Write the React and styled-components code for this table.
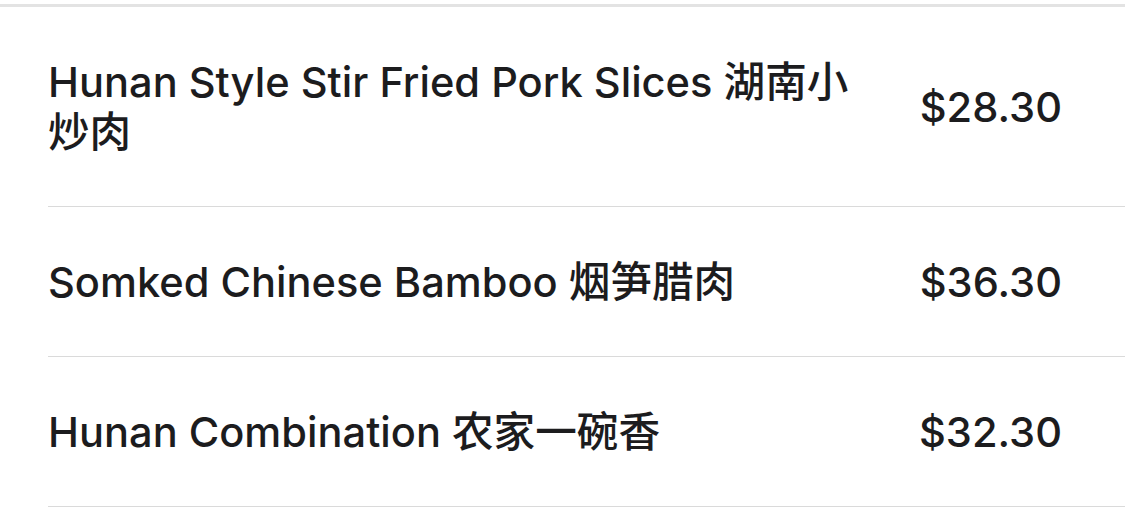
import styled, { createGlobalStyle } from "styled-components";

const GlobalStyle = createGlobalStyle`
	html, body {
		margin: 0;
		padding: 0;
		background: #ffffff;
	}
	body {
		font-family: Inter, "Noto Sans CJK SC", sans-serif;
		color: #1c1c1e;
		-webkit-font-smoothing: antialiased;
	}
`;

// 위쪽 회색 구분 띠
const TopRule = styled.div`
	margin-top: 4px;
	height: 3px;
	background-color: #e3e3e3;
`;

// 메뉴 목록
const MenuList = styled.ul`
	list-style: none;
	margin: 0;
	padding: 0 0 0 48px;
`;

const MenuRow = styled.li`
	display: grid;
	grid-template-columns: minmax(0, 830px) 1fr;
	align-items: center;
	padding: 49.5px 63px 49.5px 0;
	border-bottom: 1px solid #dadada;
`;

const DishName = styled.span`
	font-size: 41.6px;
	line-height: 50px;
	font-weight: 500;
`;

const Price = styled.span`
	font-size: 41.6px;
	line-height: 50px;
	font-weight: 500;
	text-align: right;
`;

const dishes = [
	{ name: "Hunan Style Stir Fried Pork Slices 湖南小炒肉", price: "$28.30" },
	{ name: "Somked Chinese Bamboo 烟笋腊肉", price: "$36.30" },
	{ name: "Hunan Combination 农家一碗香", price: "$32.30" },
];

function App() {
	return (
		<>
			<GlobalStyle />
			<TopRule />
			<MenuList>
				{dishes.map((dish) => (
					<MenuRow key={dish.name}>
						<DishName>{dish.name}</DishName>
						<Price>{dish.price}</Price>
					</MenuRow>
				))}
			</MenuList>
		</>
	);
}

export default App;
